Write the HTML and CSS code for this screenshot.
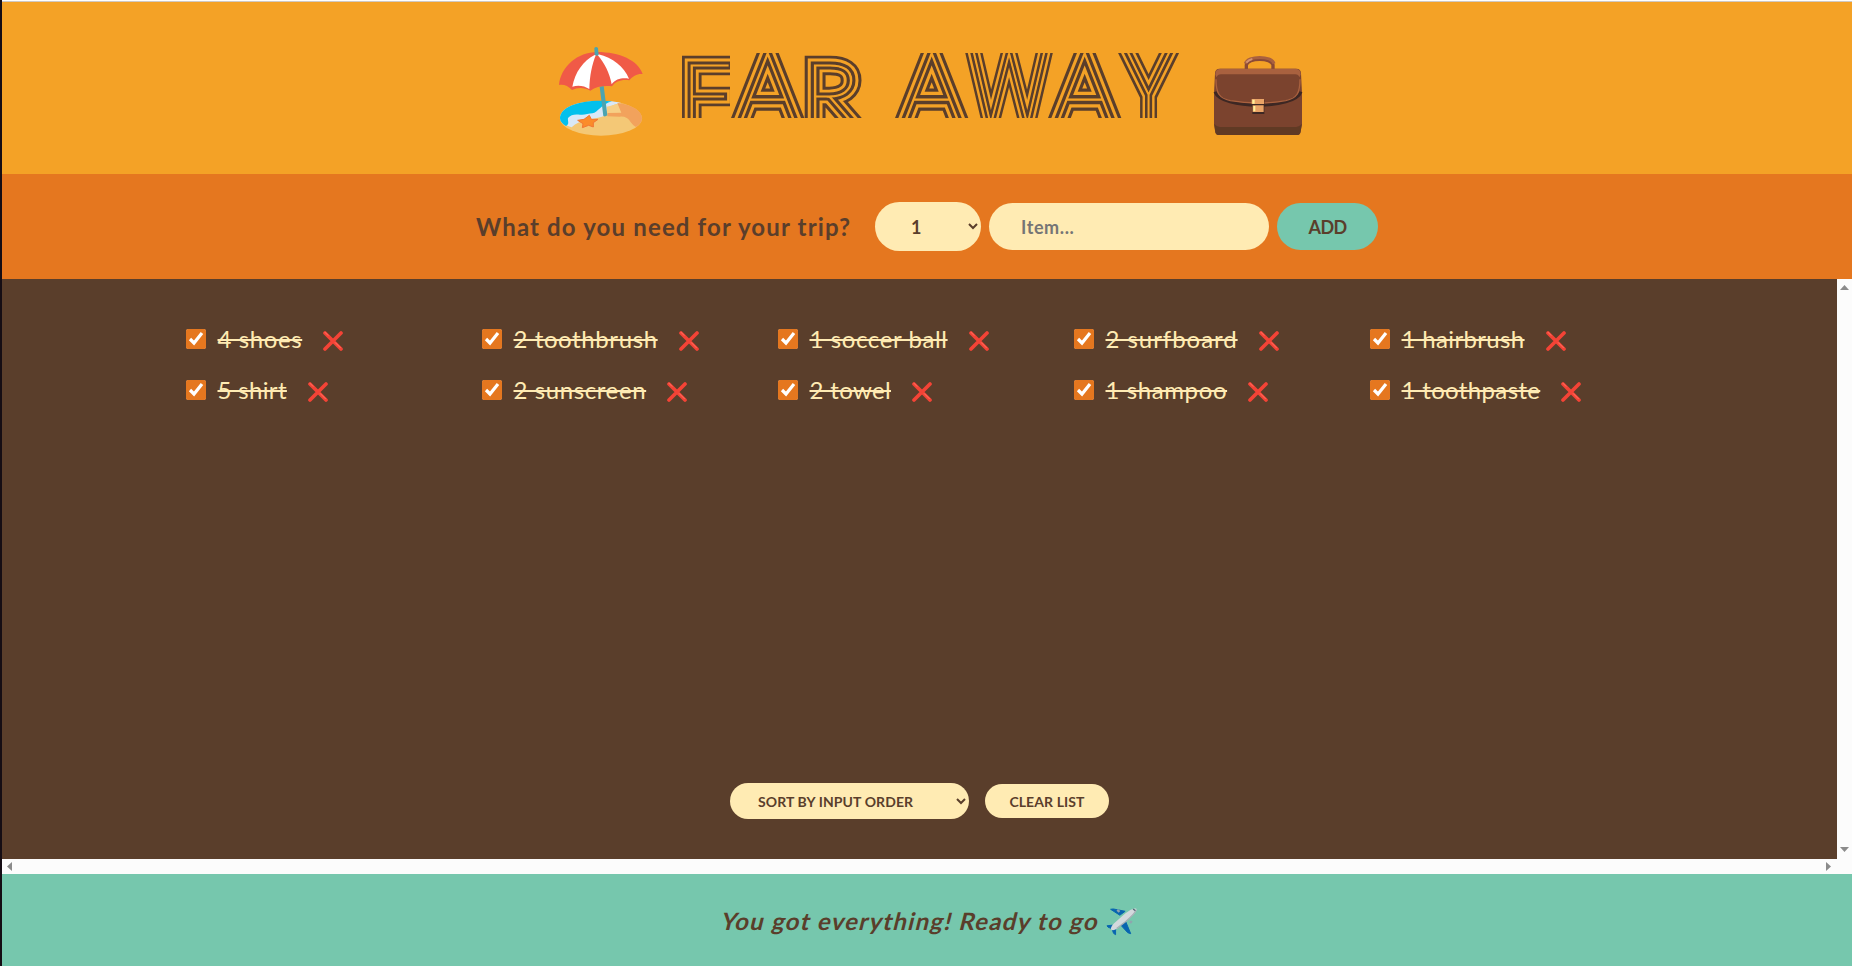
FILE: index.html
```html
<!DOCTYPE html>
<html lang="en">
<head>
<meta charset="utf-8">
<title>Far Away</title>
<link rel="stylesheet" href="styles.css">
</head>
<body>
<svg class="defs" aria-hidden="true">
  <symbol id="cross" viewBox="0 0 60 60">
    <path d="M6 6L54 54M54 6L6 54" stroke="#f44336" stroke-width="11" stroke-linecap="round"/>
    <path d="M6 4L15 13M37 35L52 50" stroke="#ff7566" stroke-width="3" stroke-linecap="round"/>
  </symbol>
</svg>
<div class="app">
  <header class="header">
    <svg class="beach" viewBox="54 45 258 276">
      <ellipse cx="183" cy="265" rx="123" ry="52" fill="#f4c876"/>
      <path d="M60 265C60 232 112 213 180 213C204 213 226 214 244 219C213 223 198 236 193 258C160 270 120 266 95 292C75 286 60 278 60 265Z" fill="#d9e8f7"/>
      <path d="M60 265C60 232 112 212 180 212C194 212 207 213 216 214C184 222 174 248 157 250C145 251 132 256 120 254C106 252 92 253 84 264C82 273 90 282 78 288C66 281 60 274 60 265Z" fill="#03c0ec"/>
      <path d="M200 230L235 222L244 250L202 256Z" fill="#f7cf85"/>
      <path d="M232 219C278 224 306 243 306 265C306 275 300 284 288 291C267 280 270 258 240 260L202 259L203 249L244 248Z" fill="#f2a25c"/>
      <path d="M148 256L154 268L174 268L160 278L160 291L146 286L127 293L129 281L113 271L132 268Z" fill="#fb8c2a" stroke="#f27634" stroke-width="3" stroke-linejoin="round"/>
      <path d="M179 170L191 168L202 256Q196 261 190 258Z" fill="#4ba4b0"/>
      <path d="M57 165C62 110 113 66 172 66C238 66 295 91 308 132C293 130 278 138 268 151C247 147 226 153 216 169C193 166 169 169 151 182C134 172 114 171 96 180C84 167 70 162 57 165Z" fill="#f05a47"/>
      <path d="M165 74C129 93 105 126 97 170C114 164 133 167 148 177C149 137 156 102 168 74Z" fill="#fff"/>
      <path d="M172 74C195 101 208 127 215 163C227 146 247 143 267 146C252 110 218 83 175 73Z" fill="#fff"/>
      <path d="M163 54Q168 48 174 54L176 75Q170 79 164 75Z" fill="#4ba4b0"/>
    </svg>
    <h1 class="title" aria-label="Far Away">
      <span class="letter f"><span class="glyph" data-c="F">F<i data-c="F"></i></span></span><span class="letter a"><span class="glyph" data-c="A">A<i data-c="A"></i></span></span><span class="letter r"><span class="glyph" data-c="R">R<i data-c="R"></i></span></span>
      <span class="letter a a2"><span class="glyph" data-c="A">A<i data-c="A"></i></span></span><span class="letter w"><span class="glyph" data-c="W">W<i data-c="W"></i></span></span><span class="letter a a3"><span class="glyph" data-c="A">A<i data-c="A"></i></span></span><span class="letter y"><span class="glyph" data-c="Y">Y<i data-c="Y"></i></span></span>
    </h1>
    <svg class="case" viewBox="1000 75 270 243">
      <path d="M1100 117V105C1104 82 1176 82 1180 105V117" fill="none" stroke="#8b4a35" stroke-width="10"/>
      <path d="M1097 101C1104 76 1176 76 1183 101" fill="none" stroke="#a9613f" stroke-width="9"/>
      <path d="M1100 98Q1107 89 1118 87" fill="none" stroke="#d49271" stroke-width="6"/>
      <path d="M1006 130Q1006 116 1020 116H1250Q1264 116 1264 130L1267 190V285L1262 308Q1260 315 1252 315H1017Q1009 315 1007 308L1003 285V190Z" fill="#7b432e"/>
      <path d="M1004 281Q1010 291 1028 291H1242Q1260 291 1266 281L1263 305Q1261 315 1252 315H1018Q1009 315 1007 305Z" fill="#603a24"/>
      <path d="M1007 134Q1007 116 1022 116H1248Q1263 116 1263 134L1259 142Q1257 133 1247 133H1024Q1013 133 1011 142Z" fill="#a9613f"/>
      <path d="M1006 185C1024 239 1246 239 1264 185" fill="none" stroke="#3d2723" stroke-width="9"/>
      <path d="M1009 148C1009 190 1018 204 1052 212Q1135 226 1218 212C1252 204 1261 190 1261 148" fill="none" stroke="#a9613f" stroke-width="4"/>
      <rect x="1118" y="210" width="36" height="42" fill="#3d2723"/>
      <path d="M1116 207H1153V222H1116ZM1119 226H1152V246H1119Z" fill="#e9a366"/>
      <path d="M1118 209H1125V221H1118ZM1121 228H1127V244H1121Z" fill="#fff09a"/>
    </svg>
  </header>

  <form class="add-form">
    <h3 class="question">What do you need for your trip?</h3>
    <select class="qty"><option>1</option><option>2</option></select>
    <input class="item-input" type="text" placeholder="Item...">
    <button class="add" type="button">ADD</button>
  </form>

  <main class="list-area">
    <div class="list">
      <ul class="items">
        <li><input type="checkbox" checked><span class="name">4 shoes</span><svg class="x"><use href="#cross"/></svg></li>
        <li><input type="checkbox" checked><span class="name">2 toothbrush</span><svg class="x"><use href="#cross"/></svg></li>
        <li><input type="checkbox" checked><span class="name">1 soccer ball</span><svg class="x"><use href="#cross"/></svg></li>
        <li><input type="checkbox" checked><span class="name loose">2 surfboard</span><svg class="x"><use href="#cross"/></svg></li>
        <li><input type="checkbox" checked><span class="name tight">1 hairbrush</span><svg class="x"><use href="#cross"/></svg></li>
        <li><input type="checkbox" checked><span class="name tight">5 shirt</span><svg class="x"><use href="#cross"/></svg></li>
        <li><input type="checkbox" checked><span class="name">2 sunscreen</span><svg class="x"><use href="#cross"/></svg></li>
        <li><input type="checkbox" checked><span class="name tight">2 towel</span><svg class="x"><use href="#cross"/></svg></li>
        <li><input type="checkbox" checked><span class="name">1 shampoo</span><svg class="x"><use href="#cross"/></svg></li>
        <li><input type="checkbox" checked><span class="name tight">1 toothpaste</span><svg class="x"><use href="#cross"/></svg></li>
      </ul>
      <div class="actions">
        <select class="sort"><option>SORT BY INPUT ORDER</option></select>
        <button class="clear" type="button">CLEAR LIST</button>
      </div>
    </div>
    <div class="scroll-y">
      <svg width="9" height="5" viewBox="0 0 9 5"><path d="M0 5L4.500 0L9 5Z" fill="#8b8b8b"/></svg>
      <svg width="9" height="5" viewBox="0 0 9 5"><path d="M0 0L4.500 5L9 0Z" fill="#8b8b8b"/></svg>
    </div>
    <div class="scroll-x">
      <svg width="5" height="9" viewBox="0 0 5 9"><path d="M5 0L0 4.500L5 9Z" fill="#8b8b8b"/></svg>
      <svg width="5" height="9" viewBox="0 0 5 9"><path d="M0 0L5 4.500L0 9Z" fill="#8b8b8b"/></svg>
    </div>
  </main>

  <footer class="stats">
    <span class="message">You got everything! Ready to go</span>
    <svg class="plane" viewBox="1218 412 94 86">
      <path d="M1260 436L1232 418L1240 417L1276 424ZM1278 456L1293 492L1284 489L1262 465ZM1238 466L1221 468L1224 472L1236 477L1241 491L1247 495L1247 478Z" fill="#0865b0" stroke="#0865b0" stroke-width="3" stroke-linejoin="round"/>
      <path d="M1252 420L1259 426M1296 453L1291 460" stroke="#90a4ae" stroke-width="7"/>
      <path d="M1310 416C1300 413 1289 421 1276 431L1242 461C1235 468 1231 475 1234 480C1239 484 1248 479 1255 474L1291 444C1303 433 1313 424 1310 416Z" fill="#d3d9dd"/>
      <path d="M1309 420C1307 430 1291 444 1278 455L1250 476" fill="none" stroke="#a5afb5" stroke-width="4"/>
      <path d="M1300 417L1307 422" stroke="#566a75" stroke-width="4"/>
    </svg>
  </footer>
</div>
</body>
</html>
```
FILE: styles.css
```css
* { box-sizing: border-box; margin: 0; padding: 0; }

body {
  height: 100vh;
  overflow: hidden;
  padding-left: 2px;
  background: #150d14;
  color: #5a3e2b;
  font-family: Lato, "Open Sans", sans-serif;
}

.defs { display: none; }

.app {
  height: 100vh;
  display: grid;
  grid-template-rows: 174px 105px 595px 92px;
}

.header {
  display: flex;
  justify-content: center;
  align-items: flex-start;
  background: #f4a226;
  border-top: 1px solid #fff;
  box-shadow: inset 0 1px #cfc9c4;
}

.beach { flex: none; width: 86px; height: 92px; margin: 44px 38px 0 7px; }
.case { flex: none; width: 90px; height: 81px; margin: 54px 0 0 36px; }

.title {
  display: flex;
  width: 495px;
  height: 65px;
  margin-top: 52px;
  font-family: Lato, sans-serif;
  font-size: 90px;
  font-weight: 100;
  line-height: 65px;
}

.letter { flex: none; display: flex; justify-content: center; height: 65px; clip-path: inset(0); }
.letter.f { width: 48px; }
.letter.a { width: 76px; margin-right: -5px; }
.letter.r { width: 62px; }
.letter.a2 { margin-left: 31px; margin-right: -7px; }
.letter.w { width: 92px; margin-right: -8px; }
.letter.a3 { margin-right: -5px; }
.letter.y { width: 61px; }

/* Concentric stripes built from progressively narrower strokes */
.glyph { position: relative; display: block; -webkit-text-stroke: 18.600px #5a3e2b; }
.glyph::before, .glyph::after, .glyph i::before { content: attr(data-c); position: absolute; left: 0; top: 0; font-style: normal; }
.glyph::before { -webkit-text-stroke: 12.800px #f4a226; }
.glyph::after { -webkit-text-stroke: 7.200px #5a3e2b; }
.glyph i::before { z-index: 1; color: #f4a226; -webkit-text-stroke: 1.200px #f4a226; }
.f .glyph { top: 8px; }
.r .glyph { top: 8px; transform: scaleX(1.06); }
.a .glyph { transform: scale(1.07, 1.14); }
.w .glyph { transform: scale(.84, 1.14); }
.y .glyph { transform: scale(.86, 1.14); }

.add-form {
  display: flex;
  justify-content: center;
  align-items: center;
  gap: 8px;
  background: #e5771f;
}

.question { width: 375px; margin-right: 16px; font-size: 24px; font-weight: 700; letter-spacing: 1.150px; white-space: nowrap; }

select, button, .item-input {
  border: 0;
  border-radius: 100px;
  background: #ffebb3;
  color: #5a3e2b;
  font-family: inherit;
  font-size: 18px;
  font-weight: 700;
}

.qty { width: 106px; height: 49px; padding: 12px 32px; }
.item-input { width: 280px; height: 47px; padding: 12px 32px; letter-spacing: .6px; }
.item-input::placeholder { color: #757575; }
.add { width: 101px; height: 47px; background: #76c7ad; letter-spacing: -.7px; }

.list-area {
  display: grid;
  grid-template: 580px 15px / 1fr 15px;
  background: #fcfcfc;
}

.list {
  display: flex;
  flex-direction: column;
  justify-content: space-between;
  align-items: center;
  padding: 40px 0;
  background: #5a3e2b;
  color: #ffebb3;
}

.items {
  width: 80%;
  display: grid;
  grid-template-columns: repeat(5, 1fr);
  grid-auto-rows: 39px;
  gap: 12px;
  list-style: none;
}

.items li { display: flex; align-items: center; }
.items input { width: 20px; height: 20px; margin-right: 12px; accent-color: #e5771f; }
.name { font-size: 24px; letter-spacing: .600px; text-decoration: line-through; white-space: nowrap; }
.name.loose { letter-spacing: .95px; }
.name.tight { letter-spacing: .35px; }
.x { width: 20px; height: 20px; margin: 4px 0 0 21px; }

.actions { display: flex; align-items: center; gap: 16px; }
.actions select, .actions button { font-size: 14px; letter-spacing: .1px; }
.sort { width: 239px; height: 36px; padding: 8px 24px; }
.clear { width: 124px; height: 34px; }

.scroll-y { display: flex; flex-direction: column; justify-content: space-between; align-items: center; padding: 6px 0 7px; }
.scroll-x { display: flex; justify-content: space-between; align-items: center; padding: 0 6px 0 5px; }

.stats {
  display: flex;
  justify-content: center;
  align-items: center;
  gap: 8px;
  padding-left: 4px;
  background: #76c7ad;
  font-size: 24px;
  font-weight: 700;
}

.message { width: 376px; letter-spacing: 1.250px; white-space: nowrap; transform: skewX(-14deg); }
.plane { width: 31px; height: 29px; margin-top: 3px; }
```
